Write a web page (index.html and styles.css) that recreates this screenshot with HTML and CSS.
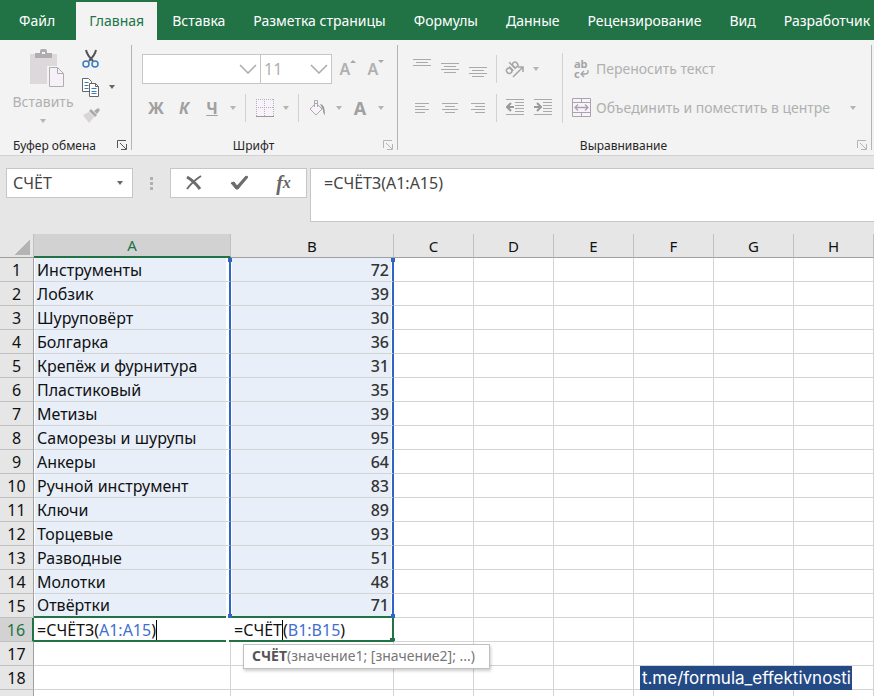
FILE: index.html
```html
<!DOCTYPE html>
<html lang="ru">
<head>
  <meta charset="UTF-8" />
  <meta name="viewport" content="width=device-width, initial-scale=1.0"/>
  <title>СЧЁТ и СЧЁТЗ</title>
  <link rel="stylesheet" href="styles.css">
</head>
<body>

<nav class="tabs">
  <button class="tab file">Файл</button>
  <button class="tab active">Главная</button>
  <button class="tab">Вставка</button>
  <button class="tab">Разметка страницы</button>
  <button class="tab">Формулы</button>
  <button class="tab">Данные</button>
  <button class="tab">Рецензирование</button>
  <button class="tab">Вид</button>
  <button class="tab">Разработчик</button>
</nav>

<div class="ribbon">
  <!-- Буфер обмена -->
  <section class="group clipboard">
    <div class="group-body">
      <button class="paste">
        <svg width="36" height="40" viewBox="0 0 36 40">
          <path d="M1 5h27v30H1z" fill="#dcd8dc"/>
          <path d="M6 4h5V2q0-2 2-2h3q2 0 2 2v2h5v5H6z" fill="#b0adb0"/>
          <path d="M13 3h3v2h-3z" fill="#f3f3f3"/>
          <path d="M18 17h17v22H18z" fill="#f3f3f3"/>
          <path d="M20.5 18.5h8l6 6v13h-14z" fill="#f6f1f8" stroke="#b0adb0"/>
          <path d="M28.5 18.5v6h6" fill="none" stroke="#b0adb0"/>
        </svg>
        <span>Вставить</span>
        <i class="arrow"></i>
      </button>
      <div class="clip-tools">
        <button class="tool" aria-label="Вырезать">
          <svg width="18" height="20" viewBox="0 0 18 20" fill="none">
            <path d="M4 1q1 5 7 11M14 1q-1 5-7 11" stroke="#555" stroke-width="2"/>
            <circle cx="4" cy="15" r="3" stroke="#3c7ac0" stroke-width="1.5"/>
            <circle cx="13" cy="15" r="3" stroke="#3c7ac0" stroke-width="1.5"/>
          </svg>
        </button>
        <div class="pair">
          <button class="tool" aria-label="Копировать">
            <svg width="18" height="19" viewBox="0 0 18 19" fill="#fff" stroke="#666">
              <path d="M.5.5h6l3 3v10h-9z"/>
              <path d="M2.5 4.5h4m-4 3h4m-4 3h4" stroke="#3c7ac0"/>
              <path d="M7.5 5.5h6l3 3v10h-9z"/>
              <path d="M13.5 5.5v3h3" fill="none"/>
              <path d="M9.5 10.5h5m-5 3h5m-5 2h5" stroke="#3c7ac0"/>
            </svg>
          </button>
          <button class="drop dark" aria-label="Параметры копирования"><i class="arrow"></i></button>
        </div>
        <button class="tool" aria-label="Формат по образцу">
          <svg width="18" height="16" viewBox="0 0 18 16">
            <path d="M1 8l6-3 5 5-5 6z" fill="#d8d4d8"/>
            <path d="M7 4l2-2 6 6-2 2z" fill="#aaa"/>
            <path d="M12 4l4-3 2 2-3 4z" fill="#aaa"/>
          </svg>
        </button>
      </div>
    </div>
    <div class="group-label"><span>Буфер обмена</span>
      <button class="launcher dark" aria-label="Параметры буфера обмена"><svg width="10" height="10" viewBox="0 0 10 10" fill="none" stroke="currentColor"><path d="M.5 8V.5H9M3 3l6 6M9.5 4v5.5H4"/></svg></button>
    </div>
  </section>

  <!-- Шрифт -->
  <section class="group font">
    <div class="group-body rows">
      <div class="line">
        <select class="font-name" aria-label="Шрифт"><option></option></select>
        <select class="font-size" aria-label="Размер шрифта"><option>11</option></select>
        <button class="tool grow" aria-label="Увеличить шрифт">A<svg width="6" height="4" viewBox="0 0 6 4"><path d="M0 3l3-3 3 3z" fill="#a8a8a8"/></svg></button>
        <button class="tool grow" aria-label="Уменьшить шрифт">A<svg width="6" height="4" viewBox="0 0 6 4"><path d="M0 0l3 3 3-3z" fill="#a8a8a8"/></svg></button>
      </div>
      <div class="line">
        <button class="tool letter">Ж</button>
        <button class="tool letter italic">К</button>
        <button class="tool letter under">Ч</button>
        <button class="drop" aria-label="Подчёркивание"><i class="arrow"></i></button>
        <span class="sep"></span>
        <button class="tool" aria-label="Границы">
          <svg width="18" height="18" viewBox="0 0 18 18" fill="none" stroke="#b5adb8">
            <path d="M0 0h18v17H0z" fill="#f8f3fa" stroke="none"/>
            <path d="M.5 0v17M8.5 0v17M17.5 0v17M0 .5h18M0 8.5h18" stroke-dasharray="1 1"/>
            <path d="M0 17.5h18" stroke="#999"/>
          </svg>
        </button>
        <button class="drop" aria-label="Виды границ"><i class="arrow"></i></button>
        <span class="sep"></span>
        <button class="tool" aria-label="Цвет заливки">
          <svg width="18" height="18" viewBox="0 0 18 18" fill="none" stroke="#aaa">
            <path d="M7 4l6 6-6 6-6-6z" fill="#f8f3fa"/>
            <path d="M5.5 8V1.5h3V8"/>
            <path d="M11 5q5 0 5 11q-2-1-2-5z" fill="#999" stroke="none"/>
          </svg>
        </button>
        <button class="drop" aria-label="Выбор заливки"><i class="arrow"></i></button>
        <button class="tool letter big">A</button>
        <button class="drop" aria-label="Цвет текста"><i class="arrow"></i></button>
      </div>
    </div>
    <div class="group-label"><span>Шрифт</span>
      <button class="launcher" aria-label="Параметры шрифта"><svg width="10" height="10" viewBox="0 0 10 10" fill="none" stroke="currentColor"><path d="M.5 8V.5H9M3 3l6 6M9.5 4v5.5H4"/></svg></button>
    </div>
  </section>

  <!-- Выравнивание -->
  <section class="group align">
    <div class="group-body">
      <div class="rows">
        <div class="line">
          <button class="tool" aria-label="По верхнему краю"><svg width="18" height="20" viewBox="0 0 18 20" stroke="#aaa"><path d="M0 .5h18M3 3.5h12M0 6.5h18"/></svg></button>
          <button class="tool" aria-label="По середине"><svg width="18" height="20" viewBox="0 0 18 20" stroke="#aaa"><path d="M0 4.5h18M3 7.5h12M0 10.5h18M3 13.5h12"/></svg></button>
          <button class="tool" aria-label="По нижнему краю"><svg width="18" height="20" viewBox="0 0 18 20" stroke="#aaa"><path d="M0 8.5h18M3 11.5h12M0 14.5h18M3 17.5h12"/></svg></button>
          <span class="sep"></span>
          <button class="tool" aria-label="Ориентация">
            <svg width="20" height="18" viewBox="0 0 20 18" fill="none" stroke="#a5a5a5" stroke-width="1.5">
              <g transform="rotate(-45 7 8)"><ellipse cx="3" cy="8" rx="2.5" ry="2.8"/><path d="M6 5v6M9 2v9"/><ellipse cx="11.5" cy="8" rx="2.5" ry="2.8"/></g>
              <path d="M8 17L18 7M13 7h5v5"/>
            </svg>
          </button>
          <button class="drop" aria-label="Выбор ориентации"><i class="arrow"></i></button>
        </div>
        <div class="line">
          <button class="tool" aria-label="По левому краю"><svg width="14" height="12" viewBox="0 0 14 12" stroke="#aaa"><path d="M0 1.5h14M0 4.5h10M0 7.5h14M0 10.5h10"/></svg></button>
          <button class="tool" aria-label="По центру"><svg width="16" height="12" viewBox="0 0 16 12" stroke="#aaa"><path d="M0 1.5h16M3 4.5h10M0 7.5h16M3 10.5h10"/></svg></button>
          <button class="tool" aria-label="По правому краю"><svg width="14" height="12" viewBox="0 0 14 12" stroke="#aaa"><path d="M0 1.5h14M4 4.5h10M0 7.5h14M4 10.5h10"/></svg></button>
          <span class="sep"></span>
          <button class="tool" aria-label="Уменьшить отступ"><svg width="18" height="17" viewBox="0 0 18 17" fill="none" stroke="#aaa"><path d="M0 .5h18M9 3.5h9M9 6.5h9M9 9.5h9M9 12.5h9M0 15.5h18"/><path d="M8 8H2M5 4L1 8l4 4" stroke="#999" stroke-width="2"/></svg></button>
          <button class="tool" aria-label="Увеличить отступ"><svg width="18" height="17" viewBox="0 0 18 17" fill="none" stroke="#aaa"><path d="M0 .5h18M9 3.5h9M9 6.5h9M9 9.5h9M9 12.5h9M0 15.5h18"/><path d="M0 8h6M3 4l4 4-4 4" stroke="#999" stroke-width="2"/></svg></button>
        </div>
      </div>
      <span class="sep tall"></span>
      <div class="rows">
        <button class="wide">
          <span class="abc"><b>ab</b><b>c<svg width="9" height="8" viewBox="0 0 9 8" fill="none" stroke="#a5a5a5" stroke-width="1.3"><path d="M8 0v2q0 2-3 2H1M4 1L1 4l3 3"/></svg></b></span>
          <span>Переносить текст</span>
        </button>
        <div class="line">
          <button class="wide">
            <svg width="20" height="20" viewBox="0 0 20 20" fill="none" stroke="#aaa2ac">
              <path d="M.5.5h18v18H.5zM.5 4.5h18M.5 14.5h18M9.5.5v4M9.5 14.5v4" fill="#f8f3fa"/>
              <path d="M3 9.5h13M6 6.5l-3 3 3 3M13 6.5l3 3-3 3" stroke-width="1.3"/>
            </svg>
            <span>Объединить и поместить в центре</span>
          </button>
          <button class="drop" aria-label="Варианты объединения"><i class="arrow"></i></button>
        </div>
      </div>
    </div>
    <div class="group-label"><span>Выравнивание</span>
      <button class="launcher" aria-label="Параметры выравнивания"><svg width="10" height="10" viewBox="0 0 10 10" fill="none" stroke="currentColor"><path d="M.5 8V.5H9M3 3l6 6M9.5 4v5.5H4"/></svg></button>
    </div>
  </section>
</div>

<div class="formula-row">
  <div class="name-box">
    <input type="text" value="СЧЁТ" aria-label="Поле имени">
    <button class="drop dark" aria-label="Список имён"><i class="arrow"></i></button>
  </div>
  <div class="dots"><i></i><i></i><i></i></div>
  <div class="formula-tools">
    <button aria-label="Отмена"><svg width="18" height="16" viewBox="0 0 18 16" fill="none" stroke="#6c6c6c"><path d="M2 2q7 4 13 12" stroke-width="3"/><path d="M16 1Q8 6 2 14" stroke-width="2"/></svg></button>
    <button aria-label="Ввод"><svg width="18" height="16" viewBox="0 0 18 16"><path d="M1 8l3-1 3 4 9-10 2 1L8 14H6z" fill="#6c6c6c" stroke="#6c6c6c"/></svg></button>
    <button class="fx" aria-label="Вставить функцию"><span>f</span><small>x</small></button>
  </div>
  <textarea class="formula" aria-label="Строка формул">=СЧЁТЗ(A1:A15)</textarea>
</div>

<main class="sheet">
  <table>
    <colgroup>
      <col class="c-num"><col class="c-a"><col class="c-b">
      <col class="c"><col class="c"><col class="c"><col class="c"><col class="c"><col>
    </colgroup>
    <thead>
      <tr><th class="corner"><i></i></th><th class="current">A</th><th>B</th><th>C</th><th>D</th><th>E</th><th>F</th><th>G</th><th>H</th></tr>
    </thead>
    <tbody>
      <tr class="data first"><th>1</th><td>Инструменты</td><td>72</td><td></td><td></td><td></td><td></td><td></td><td></td></tr>
      <tr class="data"><th>2</th><td>Лобзик</td><td>39</td><td></td><td></td><td></td><td></td><td></td><td></td></tr>
      <tr class="data"><th>3</th><td>Шуруповёрт</td><td>30</td><td></td><td></td><td></td><td></td><td></td><td></td></tr>
      <tr class="data"><th>4</th><td>Болгарка</td><td>36</td><td></td><td></td><td></td><td></td><td></td><td></td></tr>
      <tr class="data"><th>5</th><td>Крепёж и фурнитура</td><td>31</td><td></td><td></td><td></td><td></td><td></td><td></td></tr>
      <tr class="data"><th>6</th><td>Пластиковый</td><td>35</td><td></td><td></td><td></td><td></td><td></td><td></td></tr>
      <tr class="data"><th>7</th><td>Метизы</td><td>39</td><td></td><td></td><td></td><td></td><td></td><td></td></tr>
      <tr class="data"><th>8</th><td>Саморезы и шурупы</td><td>95</td><td></td><td></td><td></td><td></td><td></td><td></td></tr>
      <tr class="data"><th>9</th><td>Анкеры</td><td>64</td><td></td><td></td><td></td><td></td><td></td><td></td></tr>
      <tr class="data"><th>10</th><td>Ручной инструмент</td><td>83</td><td></td><td></td><td></td><td></td><td></td><td></td></tr>
      <tr class="data"><th>11</th><td>Ключи</td><td>89</td><td></td><td></td><td></td><td></td><td></td><td></td></tr>
      <tr class="data"><th>12</th><td>Торцевые</td><td>93</td><td></td><td></td><td></td><td></td><td></td><td></td></tr>
      <tr class="data"><th>13</th><td>Разводные</td><td>51</td><td></td><td></td><td></td><td></td><td></td><td></td></tr>
      <tr class="data"><th>14</th><td>Молотки</td><td>48</td><td></td><td></td><td></td><td></td><td></td><td></td></tr>
      <tr class="data last"><th>15</th><td>Отвёртки</td><td>71</td><td></td><td></td><td></td><td></td><td></td><td></td></tr>
      <tr class="edit">
        <th class="current">16</th>
        <td>=СЧЁТЗ(<span class="ref">A1:A15</span>)<i class="caret"></i></td>
        <td>=СЧЁТ<i class="caret"></i>(<span class="ref">B1:B15</span>)
          <div class="hint"><b>СЧЁТ</b>(значение1; [значение2]; ...)</div>
        </td>
        <td></td><td></td><td></td><td></td><td></td><td></td>
      </tr>
      <tr><th>17</th><td></td><td></td><td></td><td></td><td></td><td></td><td></td><td></td></tr>
      <tr><th>18</th><td></td><td></td><td></td><td></td><td></td><td></td><td></td><td></td></tr>
      <tr><th></th><td></td><td></td><td></td><td></td><td></td><td></td><td></td><td></td></tr>
    </tbody>
  </table>
</main>

<a class="badge" href="https://t.me/formula_effektivnosti">t.me/formula_effektivnosti</a>

</body>
</html>
```
FILE: styles.css
```css
* {
  box-sizing: border-box;
}

body {
  margin: 0;
  height: 100vh;
  overflow: hidden;
  position: relative;
  display: flex;
  flex-direction: column;
  background: #e6e6e6;
  font-family: "Noto Sans", "Open Sans", sans-serif;
  font-size: 14px;
  color: #262626;
}

button, input, select, textarea {
  font: inherit;
  color: inherit;
  border: none;
  background: none;
  padding: 0;
  margin: 0;
  border-radius: 0;
  outline: none;
}

svg {
  display: block;
  flex-shrink: 0;
}

/* tabs */
.tabs {
  display: flex;
  flex-shrink: 0;
  gap: 2px;
  height: 40px;
  padding-top: 2px;
  background: #217346;
  overflow: hidden;
}

.tab {
  flex-shrink: 0;
  padding: 0 13px 2px;
  color: #fff;
  white-space: nowrap;
}

.tab.file {
  padding: 0 19px 2px;
}

.tab.active {
  background: #f3f3f3;
  color: #217346;
}

/* ribbon */
.ribbon {
  display: flex;
  flex-shrink: 0;
  height: 116px;
  background: #f3f3f3;
  border-bottom: 1px solid #d2d2d2;
  padding: 5px 0;
}

.group {
  display: flex;
  flex-direction: column;
  justify-content: space-between;
  border-right: 1px solid #b4b4b4;
}

.clipboard { width: 132px; }
.font { width: 266px; }
.align { width: 474px; }

.group-body {
  display: flex;
  color: #b0b0b0;
}

.group-label {
  display: flex;
  align-items: center;
  height: 10px;
  padding-right: 4px;
  font-size: 12px;
}

.group-label span {
  flex: 1;
  padding-right: 8px;
  text-align: center;
  white-space: nowrap;
}

.launcher { color: #b4b4b4; }
.launcher.dark { color: #555; }

.paste {
  display: flex;
  flex-direction: column;
  align-items: center;
  width: 66px;
  margin-left: 10px;
  padding-top: 4px;
}

.paste span {
  line-height: 26px;
}

.paste svg {
  margin-left: 8px;
}

.paste .arrow {
  margin-top: 4px;
}

.clip-tools {
  margin-left: 1px;
}

.clip-tools button {
  height: 28px;
}

.pair, .line {
  display: flex;
  align-items: center;
}

.rows {
  display: flex;
  flex-direction: column;
  padding-top: 4px;
}

.line, .wide {
  height: 39px;
}

.font .rows, .align .group-body {
  padding-left: 10px;
}

.tool {
  width: 28px;
  display: flex;
  align-items: center;
  justify-content: center;
}

.drop {
  width: 14px;
  display: flex;
  align-items: center;
  justify-content: center;
}

.arrow {
  border: 3px solid transparent;
  border-top: 4px solid #b4b4b4;
  border-bottom: none;
}

.dark .arrow {
  border-top-color: #666;
}

.sep {
  width: 1px;
  height: 28px;
  margin: 0 4px;
  background: #d2d2d2;
}

.font .sep {
  margin: 0 5px;
}

.sep.tall {
  height: 70px;
  margin: 8px 9px 0 5px;
}

select {
  appearance: none;
  height: 30px;
  border: 1px solid #c6c6c6;
  background: #fff url("data:image/svg+xml,%3Csvg xmlns='http://www.w3.org/2000/svg' width='18' height='10' fill='none' stroke='%23aaa' stroke-width='1.5'%3E%3Cpath d='M1 1l8 8 8-8'/%3E%3C/svg%3E") no-repeat right 3px center;
  padding-left: 3px;
}

.font-name { width: 119px; }

.font-size {
  width: 71px;
  margin-right: 2px;
  border-left: none;
  font-size: 16px;
}

.grow {
  font-weight: 600;
  font-size: 16px;
}

.grow svg {
  align-self: flex-start;
  margin-top: 2px;
}

.letter {
  font-weight: 700;
  font-size: 16px;
  color: #a0a0a0;
}

.italic { font-style: italic; }
.under { text-decoration: underline; }
.big { font-size: 18px; }

.wide {
  display: flex;
  align-items: center;
  gap: 4px;
  white-space: nowrap;
}

.wide + .drop {
  margin-left: 16px;
}

.abc {
  width: 20px;
  padding-left: 2px;
  font-size: 11px;
  line-height: 10px;
  text-align: left;
  color: #a5a5a5;
}

.abc b {
  display: flex;
  align-items: center;
}

/* formula bar */
.formula-row {
  display: flex;
  align-items: flex-start;
  flex-shrink: 0;
  height: 78px;
  padding: 12px 0 0 6px;
  color: #444;
}

.name-box {
  display: flex;
  width: 127px;
  height: 30px;
  padding: 0 5px 0 6px;
  background: #fff;
  border: 1px solid #c6c6c6;
}

.name-box input {
  flex: 1;
  min-width: 0;
  font-size: 16px;
}

.dots {
  display: grid;
  gap: 2px;
  width: 37px;
  height: 30px;
  place-content: center;
}

.dots i {
  width: 3px;
  height: 3px;
  background: #b0b0b0;
}

.formula-tools {
  display: flex;
  width: 137px;
  height: 30px;
  background: #fff;
  border: 1px solid #c6c6c6;
}

.formula-tools button {
  flex: 1;
  display: flex;
  align-items: center;
  justify-content: center;
}

.formula-tools .fx {
  font-family: "Liberation Serif", serif;
  font-style: italic;
  font-weight: 700;
  font-size: 20px;
  color: #666;
}

.fx small {
  font-size: 16px;
}

.formula {
  flex: 1;
  height: 54px;
  margin-left: 3px;
  padding: 3px 13px;
  font-size: 16px;
  background: #fff;
  border: 1px solid #c6c6c6;
  border-right: none;
  resize: none;
}

/* sheet */
.sheet {
  flex: 1;
  min-height: 0;
  overflow: hidden;
  background: #fff;
  color: #111;
}

table {
  width: 100%;
  table-layout: fixed;
  border-collapse: separate;
  border-spacing: 0;
  font-size: 16px;
}

.c-num { width: 34px; }
.c-a { width: 197px; }
.c-b { width: 163px; }
.c { width: 80px; }

th, td {
  position: relative;
  height: 24px;
  padding: 0;
  line-height: 20px;
  white-space: nowrap;
  border-right: 1px solid #d4d4d4;
  border-bottom: 1px solid #d4d4d4;
}

th {
  font-weight: 400;
  background: #e6e6e6;
  border-color: #c0c0c0;
}

thead th {
  font-size: 15px;
  border-bottom-color: #a0a0a0;
}

tbody th {
  border-right-color: #a0a0a0;
}

th.current {
  background: #d2d2d2;
  color: #217346;
}

thead th.current {
  border-bottom: 2px solid #217346;
}

.corner i {
  display: block;
  width: 16px;
  height: 16px;
  margin: 2px 3px 0 auto;
  background: linear-gradient(135deg, transparent 50%, #b4b4b4 50%);
}

.data td:nth-child(2), .data td:nth-child(3) {
  background: #e8eff9;
  border-right: 2px solid #2f66c4;
}

.data td:nth-child(2) {
  padding-left: 3px;
  box-shadow: inset -3px 0 #fff, inset 1px 0 #fff;
}

.data td:nth-child(3) {
  padding-right: 3px;
  text-align: right;
  font-weight: 500;
  color: #333;
  box-shadow: inset -1px 0 #fff, inset 1px 0 #fff;
}

.last td:nth-child(2), .last td:nth-child(3) {
  border-bottom: 2px solid #217346;
}

/* range handles */
.first td:nth-child(2)::after, .first td:nth-child(3)::after,
.last td:nth-child(2)::after, .last td:nth-child(3)::after {
  content: "";
  position: absolute;
  right: -3px;
  width: 4px;
  height: 4px;
  background: #2f66c4;
  z-index: 1;
}

.first td::after { top: 0; height: 2px; }
.last td::after { bottom: -2px; }

.edit td:nth-child(2), .edit td:nth-child(3) {
  padding-top: 1px;
  padding-left: 3px;
  border-bottom: 2px solid #217346;
}

.edit td:nth-child(2) {
  border-right: none;
}

.edit td:nth-child(3) {
  border-right: 2px solid #217346;
}

/* break in the outline between the two edited cells */
.edit td:nth-child(2)::after {
  content: "";
  position: absolute;
  right: 2px;
  top: -2px;
  bottom: -2px;
  width: 3px;
  background: #fff;
}

.edit td:nth-child(3)::after {
  content: "";
  position: absolute;
  right: -3px;
  bottom: -2px;
  width: 5px;
  height: 4px;
  background: #217346;
}

.edit th {
  border-right: 2px solid #217346;
}

.ref {
  color: #3f6fd0;
}

.caret {
  display: inline-block;
  width: 1px;
  height: 20px;
  vertical-align: top;
  background: #000;
}

.hint {
  position: absolute;
  top: 26px;
  left: 12px;
  z-index: 2;
  padding: 0 14px 0 8px;
  height: 25px;
  line-height: 22px;
  font-size: 14px;
  color: #777;
  background: #fff;
  border: 1px solid #c0c0c0;
  box-shadow: 1px 2px 3px rgba(0, 0, 0, 0.2);
}

.hint b {
  color: #555;
}

.badge {
  position: absolute;
  right: 22px;
  bottom: 6px;
  padding: 0 1px 0 2px;
  line-height: 24px;
  font-family: Inter, sans-serif;
  font-size: 17px;
  color: #fff;
  background: #244a86;
  text-decoration: none;
}
```
